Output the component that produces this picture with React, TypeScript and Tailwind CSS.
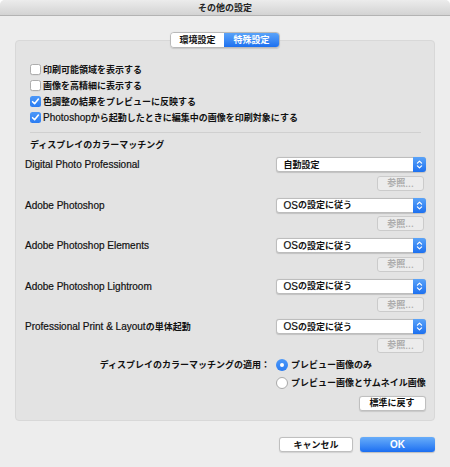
import React from 'react'

const jp = '"Noto Sans CJK JP", "Liberation Sans", sans-serif'

function Latin({ children }: { children: React.ReactNode }) {
  return <span className="text-[10px] font-normal font-[Liberation_Sans,sans-serif] [-webkit-text-stroke:0.2px_currentColor]">{children}</span>
}

function Checkbox({ checked }: { checked?: boolean }) {
  if (checked) {
    return (
      <span className="flex h-[11px] w-[11px] shrink-0 items-center justify-center rounded-[2.5px] bg-gradient-to-b from-[#4c98f8] to-[#2a7cf2]">
        <svg width="11" height="11" viewBox="0 0 11 11">
          <path d="M2.6 5.7 L4.6 7.7 L8.4 3.1" fill="none" stroke="#fff" strokeWidth="1.6" strokeLinecap="round" strokeLinejoin="round" />
        </svg>
      </span>
    )
  }
  return <span className="h-[11px] w-[11px] shrink-0 rounded-[2.5px] border border-[#adadad] bg-white shadow-[0_0.5px_0.5px_rgba(0,0,0,0.08)]" />
}

function Radio({ checked }: { checked?: boolean }) {
  if (checked) {
    return (
      <span className="flex h-[12px] w-[12px] shrink-0 items-center justify-center rounded-full bg-gradient-to-b from-[#4c98f8] to-[#2a7cf2]">
        <span className="h-[4.5px] w-[4.5px] rounded-full bg-white" />
      </span>
    )
  }
  return <span className="h-[12px] w-[12px] shrink-0 rounded-full border border-[#a9a9a9] bg-white" />
}

function Select({ children }: { children: React.ReactNode }) {
  return (
    <div className="flex h-[15px] w-[150px] items-stretch rounded-[3px] border border-[#bdbdbd] bg-white shadow-[0_0.5px_1px_rgba(0,0,0,0.15)]">
      <div className="flex flex-1 items-center pl-[7px] text-[9px]">{children}</div>
      <div className="-my-px -mr-px flex w-[13px] items-center justify-center rounded-r-[3px] bg-gradient-to-b from-[#5aa3f8] to-[#1c70f0]">
        <svg width="9" height="13" viewBox="0 0 9 13">
          <path d="M2.4 5.2 L4.5 3.1 L6.6 5.2" fill="none" stroke="#fff" strokeWidth="1.2" strokeLinecap="round" strokeLinejoin="round" />
          <path d="M2.4 7.8 L4.5 9.9 L6.6 7.8" fill="none" stroke="#fff" strokeWidth="1.2" strokeLinecap="round" strokeLinejoin="round" />
        </svg>
      </div>
    </div>
  )
}

function Browse() {
  return (
    <div className="mr-[1.5px] flex h-[15px] w-[47px] items-center justify-center rounded-[3px] border border-[#cbcbcb] bg-[#ececec] text-[9px] text-[#acacac]">
      参照<Latin>...</Latin>
    </div>
  )
}

const rows: { label: React.ReactNode; value: React.ReactNode }[] = [
  { label: <Latin>Digital Photo Professional</Latin>, value: '自動設定' },
  { label: <Latin>Adobe Photoshop</Latin>, value: <><Latin>OS</Latin>の設定に従う</> },
  { label: <Latin>Adobe Photoshop Elements</Latin>, value: <><Latin>OS</Latin>の設定に従う</> },
  { label: <Latin>Adobe Photoshop Lightroom</Latin>, value: <><Latin>OS</Latin>の設定に従う</> },
  {
    label: <><Latin>Professional Print &amp; Layout</Latin>の単体起動</>,
    value: <><Latin>OS</Latin>の設定に従う</>,
  },
]

export default function App() {
  return (
    <div
      className="flex h-[467px] w-[450px] flex-col overflow-hidden rounded-t-[5px] bg-[#ededed] text-[9px] font-semibold text-[#111]"
      style={{ fontFamily: jp }}
    >
      {/* Title bar */}
      <div className="flex h-[16px] shrink-0 items-center justify-center border-b border-[#b3b3b3] bg-gradient-to-b from-[#ececec] to-[#d3d3d3] text-[#222]">
        その他の設定
      </div>

      <div className="flex flex-col px-[15px] pt-[15.5px]">
        {/* Tabs */}
        <div className="relative z-10 flex justify-center">
          <div className="flex h-[16px] overflow-hidden rounded-[4px] border border-[#b9b9b9] shadow-[0_0.5px_1px_rgba(0,0,0,0.12)]">
            <div className="flex w-[53px] items-center justify-center bg-white">環境設定</div>
            <div className="flex w-[55px] items-center justify-center bg-gradient-to-b from-[#5aa3f8] to-[#1c70f0] text-white">
              特殊設定
            </div>
          </div>
        </div>

        {/* Group box */}
        <div className="-mt-[8px] flex h-[381px] flex-col rounded-[4px] border border-[#d8d8d8] bg-[#e3e3e3] pt-[21px]">
          <div className="flex flex-col pl-[14px]">
            <div className="flex h-[16px] items-center gap-[2px]">
              <Checkbox />
              <span>印刷可能領域を表示する</span>
            </div>
            <div className="flex h-[16px] items-center gap-[2px]">
              <Checkbox />
              <span>画像を高精細に表示する</span>
            </div>
            <div className="flex h-[16px] items-center gap-[2px]">
              <Checkbox checked />
              <span>色調整の結果をプレビューに反映する</span>
            </div>
            <div className="flex h-[16px] items-center gap-[2px]">
              <Checkbox checked />
              <span>
                <Latin>Photoshop</Latin>から起動したときに編集中の画像を印刷対象にする
              </span>
            </div>
          </div>

          <div className="ml-[14px] mr-[13px] mt-[6px] h-px bg-[#d0d0d0]" />

          <div className="mt-[4px] flex h-[16px] items-center pl-[14px]">ディスプレイのカラーマッチング</div>

          <div className="mt-[4.5px] flex flex-col gap-[7px] pl-[9px] pr-[8.5px]">
            {rows.map((r, i) => (
              <div key={i} className="flex flex-col">
                <div className="flex h-[15px] items-center justify-between">
                  <span>{r.label}</span>
                  <Select>{r.value}</Select>
                </div>
                <div className="mt-[3.5px] flex justify-end">
                  <Browse />
                </div>
              </div>
            ))}
          </div>

          <div className="mt-[4.5px] flex">
            <div className="flex h-[16px] w-[254px] items-center justify-end">ディスプレイのカラーマッチングの適用：</div>
            <div className="ml-[6px] flex flex-col gap-[2px]">
              <div className="flex h-[16px] items-center gap-[3px]">
                <Radio checked />
                <span>プレビュー画像のみ</span>
              </div>
              <div className="flex h-[16px] items-center gap-[3px]">
                <Radio />
                <span>プレビュー画像とサムネイル画像</span>
              </div>
            </div>
          </div>

          <div className="mt-[4.5px] flex justify-end pr-[8.5px]">
            <div className="flex h-[15px] w-[67px] items-center justify-center rounded-[3px] border border-[#bfbfbf] bg-white shadow-[0_0.5px_1px_rgba(0,0,0,0.12)]">
              標準に戻す
            </div>
          </div>
        </div>

        {/* Dialog buttons */}
        <div className="mt-[16.5px] flex justify-end gap-[7px]">
          <div className="flex h-[15px] w-[74px] items-center justify-center rounded-[3px] border border-[#bfbfbf] bg-white shadow-[0_0.5px_1px_rgba(0,0,0,0.12)]">
            キャンセル
          </div>
          <div className="flex h-[15px] w-[75px] items-center justify-center rounded-[3px] bg-gradient-to-b from-[#68adf9] to-[#1a6ef1] text-white shadow-[0_0.5px_1px_rgba(0,0,0,0.2)]">
            <span className="text-[10px]" style={{ fontFamily: '"Liberation Sans", sans-serif' }}>OK</span>
          </div>
        </div>
      </div>
    </div>
  )
}
